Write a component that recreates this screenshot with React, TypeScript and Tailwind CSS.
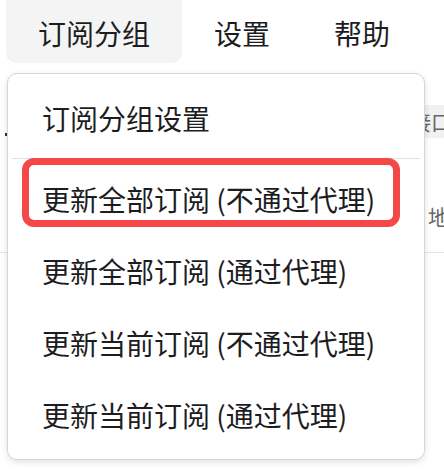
const menuItems = [
  "更新全部订阅 (不通过代理)",
  "更新全部订阅 (通过代理)",
  "更新当前订阅 (不通过代理)",
  "更新当前订阅 (通过代理)",
];

const font = {
  fontFamily: '"Noto Sans CJK SC", "Noto Sans", sans-serif',
};

export default function App() {
  return (
    <div
      className="relative w-[444px] h-[470px] overflow-hidden bg-white text-[#1d1d1f]"
      style={font}
    >
      {/* menubar */}
      <div className="flex h-[63px] pl-[6px] text-[28px] leading-none">
        <div className="flex items-center px-8 pt-[2px] bg-[#f4f4f5] rounded-b-[10px]">
          订阅分组
        </div>
        <div className="flex items-center px-8 pt-[2px]">设置</div>
        <div className="flex items-center px-8 pt-[2px]">帮助</div>
      </div>

      {/* page content behind the menu */}
      <div className="flex flex-col">
        <div className="h-[42px]" />
        <div className="flex h-[33px]">
          <div className="w-[250px] flex items-end pl-[5px] pb-[2px]">
            <span className="block w-[2px] h-[3px] bg-[#333]" />
          </div>
          <div className="flex-1 flex items-center justify-end bg-[#f1f1f1] text-[21px] leading-none text-[#666] -mr-[8px]">
            接口
          </div>
        </div>
        <div className="flex h-[114px] items-start justify-end pt-[68px] text-[21px] leading-none text-[#666] -mr-[26px]">
          地址
        </div>
        <div className="h-px bg-[#e5e5e5]" />
      </div>

      {/* dropdown menu */}
      <div className="absolute left-[7px] top-[73px] w-[418px] h-[387px] bg-white border border-[#d6d6d6] rounded-[10px] shadow-[0_2px_6px_rgba(0,0,0,0.12)] py-[8px] text-[28px] leading-none">
        <div className="flex items-center h-[72px] pl-[34px]">订阅分组设置</div>
        <div className="mx-[4px] my-[4px] h-px bg-[#e3e3e3]" />
        {menuItems.map((label) => (
          <div key={label} className="flex items-center h-[72px] pl-[34px] whitespace-pre">
            {label}
          </div>
        ))}
      </div>

      {/* highlight annotation */}
      <div className="absolute left-[22px] top-[158px] w-[378px] h-[69px] border-[7px] border-[#f44848] rounded-[12px]" />
    </div>
  );
}
